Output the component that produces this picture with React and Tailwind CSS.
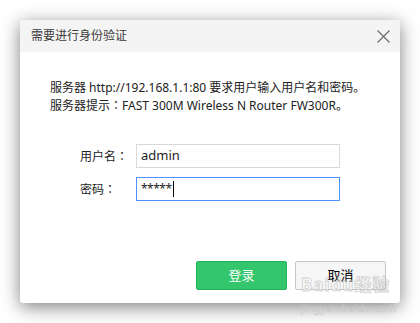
const font = { fontFamily: '"Noto Sans", "Noto Sans CJK SC", sans-serif' };

function Colon() {
  return <span className="[font-family:'Noto_Sans_CJK_TC',sans-serif]">：</span>;
}

function CloseIcon() {
  return (
    <svg width="13" height="13" viewBox="0 0 13 13" className="text-[#6b6b6b]">
      <path d="M0.5 0.5L12.5 12.5M12.5 0.5L0.5 12.5" stroke="currentColor" strokeWidth="1.2" />
    </svg>
  );
}

export default function App() {
  return (
    <div className="w-[420px] h-[323px] bg-white pt-5 pl-5 relative overflow-hidden" style={font}>
      <div className="w-[380px] h-[283px] bg-white rounded-b-[3px] shadow-[0_4px_18px_rgba(0,0,0,0.5)] flex flex-col">
        {/* 标题栏 */}
        <div className="h-8 bg-[#f4f4f4] flex items-center justify-between pl-[11px] pr-[10px]">
          <span className="text-[12px] text-[#3a3a3a]">需要进行身份验证</span>
          <CloseIcon />
        </div>

        {/* 内容 */}
        <div className="pl-[30px] pt-[27px] text-[12px] leading-[17px] text-[#222]">
          <p>服务器 http://192.168.1.1:80 要求用户输入用户名和密码。</p>
          <p>服务器提示<Colon />FAST 300M Wireless N Router FW300R。</p>
        </div>

        <div className="pl-[60px] pt-[30px] flex flex-col gap-[9px]">
          <div className="flex items-center">
            <span className="w-[56px] text-[12px] text-[#222]">用户名<Colon /></span>
            <div className="w-[204px] h-6 border border-[#d9d9d9] flex items-center pl-[4px] text-[13px] text-[#222]">
              admin
            </div>
          </div>
          <div className="flex items-center">
            <span className="w-[56px] text-[12px] text-[#222]">密码<Colon /></span>
            <div className="w-[204px] h-6 border border-[#4d90fe] flex items-center pl-[4px] text-[12px] text-[#222]">
              <span className="tracking-[-0.5px]">*****</span>
              <span className="w-px h-4 bg-black ml-[1px]" />
            </div>
          </div>
        </div>

        <div className="mt-auto mb-[13px] mr-[14px] flex justify-end gap-2">
          <button className="w-[91px] h-[29px] rounded-[2px] bg-[#33c66c] border border-[#22b25c] text-white text-[13px]">
            登录
          </button>
          <button className="w-[91px] h-[29px] rounded-[2px] bg-[#f6f6f6] border border-[#c6c6c6] text-black text-[13px]">
            取消
          </button>
        </div>
      </div>

      {/* 水印 */}
      <div className="absolute left-[301px] top-[276px] flex flex-col items-start pointer-events-none opacity-60">
        <span className="text-[17px] font-bold leading-[18px] text-white [-webkit-text-stroke:0.8px_#b5b5b5] tracking-[1px]">
          Baidu经验
        </span>
        <span className="text-[11px] leading-[14px] mt-[7px] text-white [-webkit-text-stroke:0.6px_#bdbdbd]">
          jingyan.baidu.com
        </span>
      </div>
    </div>
  );
}
